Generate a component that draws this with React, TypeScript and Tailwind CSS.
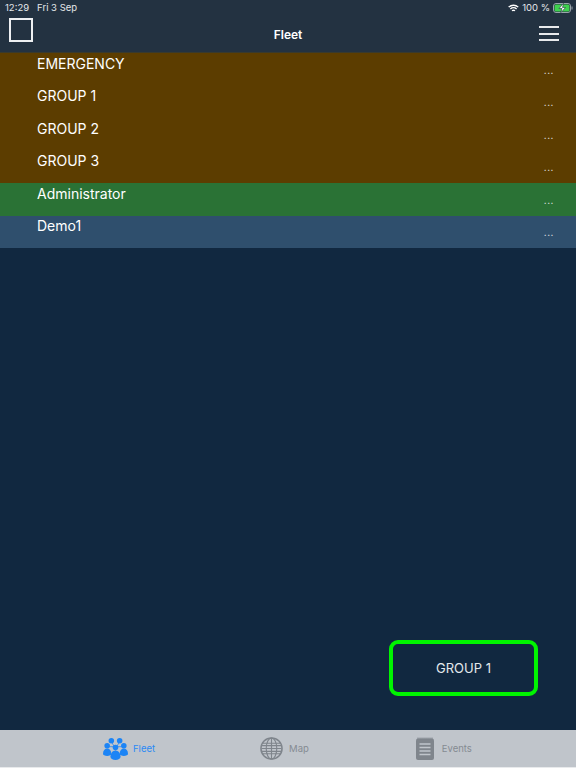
const rows = [
  { label: 'EMERGENCY', bg: 'bg-[#5c3d00]' },
  { label: 'GROUP 1', bg: 'bg-[#5c3d00]' },
  { label: 'GROUP 2', bg: 'bg-[#5c3d00]' },
  { label: 'GROUP 3', bg: 'bg-[#5c3d00]' },
  { label: 'Administrator', bg: 'bg-[#2a7235]' },
  { label: 'Demo1', bg: 'bg-[#2f4f6d]' },
]

function FleetIcon() {
  return (
    <svg width="25" height="24" viewBox="0 0 27 25" fill="#1c84f5">
      <g stroke="#1c84f5" strokeWidth="0.8">
        <path d="M9 4L13.5 13M18 4L13.5 13M4 10H23" fill="none" />
      </g>
      <circle cx="9" cy="3.5" r="3" />
      <circle cx="18" cy="3.5" r="3" />
      <circle cx="4.5" cy="9" r="3" />
      <circle cx="22.5" cy="9" r="3" />
      <path d="M0 18c0-4 2-6 4.5-6S9 14 9 18c0 1-2 2-4.5 2S0 19 0 18z" />
      <path d="M18 18c0-4 2-6 4.5-6S27 14 27 18c0 1-2 2-4.5 2S18 19 18 18z" />
      <circle cx="13.5" cy="11" r="3" />
      <path d="M8 21c0-4 2.500-7 5.500-7S19 17 19 21c0 2-2.500 3.500-5.500 3.500S8 23 8 21z" />
    </svg>
  )
}

function MapIcon() {
  return (
    <svg width="23" height="23" viewBox="0 0 24 24" fill="none" stroke="#7f858c" strokeWidth="1.2">
      <circle cx="12" cy="12" r="11" strokeWidth="1.6" />
      <ellipse cx="12" cy="12" rx="5.500" ry="11" />
      <path d="M12 1v22M1.500 12h21M3 6.500h18M3 17.500h18" />
      <path d="M1.500 9h21M1.500 15h21" />
    </svg>
  )
}

function EventsIcon() {
  return (
    <svg width="18" height="23" viewBox="0 0 18 23">
      <rect x="0" y="1.500" width="18" height="21.500" rx="2" fill="#7f858c" />
      <path d="M2 0.500v2M4 0.500v2M6 0.500v2M8 0.500v2M10 0.500v2M12 0.500v2M14 0.500v2M16 0.500v2" stroke="#7f858c" strokeWidth="1" />
      <path d="M3.500 7h11M3.500 10.500h11M3.500 14h11M3.500 17.500h11" stroke="#c0c5cb" strokeWidth="1.300" />
    </svg>
  )
}

export default function App() {
  return (
    <div className="w-[576px] h-[768px] flex flex-col bg-[#112840] overflow-hidden font-['Inter',sans-serif] text-white">
      {/* Status + nav bar */}
      <header className="h-[53px] bg-[#233241] relative shrink-0 border-b border-[#3a3a2c]">
        <div className="h-[15px] pt-[1px] pl-[5px] pr-[3px] flex items-center justify-between text-[9.500px] text-[#e4e7ea]">
          <div className="flex gap-2">
            <span>12:29</span>
            <span>Fri 3 Sep</span>
          </div>
          <div className="flex items-center gap-[3px]">
            <svg width="11" height="9" viewBox="0 0 12 9" fill="none" stroke="#fff" strokeWidth="1.500">
              <path d="M0.800 3a7.500 7.500 0 0 1 10.400 0M2.600 5a5 5 0 0 1 6.800 0M4.400 7a2.500 2.500 0 0 1 3.200 0" />
            </svg>
            <span>100 %</span>
            <svg width="20" height="10" viewBox="0 0 20 10">
              <rect x="0.500" y="0.500" width="17" height="9" rx="2.500" fill="none" stroke="#9aa4ac" />
              <rect x="1.500" y="1.500" width="15" height="7" rx="1.500" fill="#3fd14f" />
              <rect x="18.500" y="3.500" width="1" height="3" fill="#9aa4ac" />
              <path d="M10.500 0.300L6 5.500h3L7.800 9.700 12.500 4.500h-3z" fill="#fff" stroke="#233241" strokeWidth="0.600" />
            </svg>
          </div>
        </div>
        <div className="h-[38px] px-[9px] flex items-center justify-between relative">
          <div className="w-[24px] h-[24px] border-2 border-[#eef0f2] mb-[8px] box-border" />
          <span className="absolute left-0 right-0 top-[12px] text-center text-[12px] font-semibold leading-[16px]">Fleet</span>
          <button className="w-5 flex flex-col gap-[4.500px] mr-[8px] mb-[1px]">
            <span className="h-[2px] w-5 bg-[#e8eaec]" />
            <span className="h-[2px] w-5 bg-[#e8eaec]" />
            <span className="h-[2px] w-5 bg-[#e8eaec]" />
          </button>
        </div>
      </header>

      {/* List */}
      <main className="flex-1 relative">
        {rows.map((row) => (
          <div key={row.label} className={`${row.bg} h-[32.5px] pl-[37px] pr-[22px] flex justify-between`}>
            <span className="text-[14px] leading-[20px] pt-[0.5px]">{row.label}</span>
            <span className="text-[10px] leading-[12px] mt-[10.5px] tracking-[0.5px] text-[#e8eaec]">...</span>
          </div>
        ))}
        <button className="absolute right-[38px] bottom-[34px] w-[149px] h-[56px] pt-[1px] rounded-[9px] border-4 border-[#00f500] text-[13px] text-[#e4e8ec]">
          GROUP 1
        </button>
      </main>

      {/* Tab bar */}
      <nav className="h-[38px] bg-[#c0c5cb] border-b border-[#e8eaec] shrink-0 flex items-center text-[9.500px] text-[#858b92]">
        <div className="ml-[103px]">
          <FleetIcon />
        </div>
        <span className="ml-[5px] pt-[1px] text-[#2a8af5]">Fleet</span>
        <div className="ml-[105px]">
          <MapIcon />
        </div>
        <span className="ml-[6px] pt-[1px]">Map</span>
        <div className="ml-[107px]">
          <EventsIcon />
        </div>
        <span className="ml-[8px] pt-[1px]">Events</span>
      </nav>
    </div>
  )
}
